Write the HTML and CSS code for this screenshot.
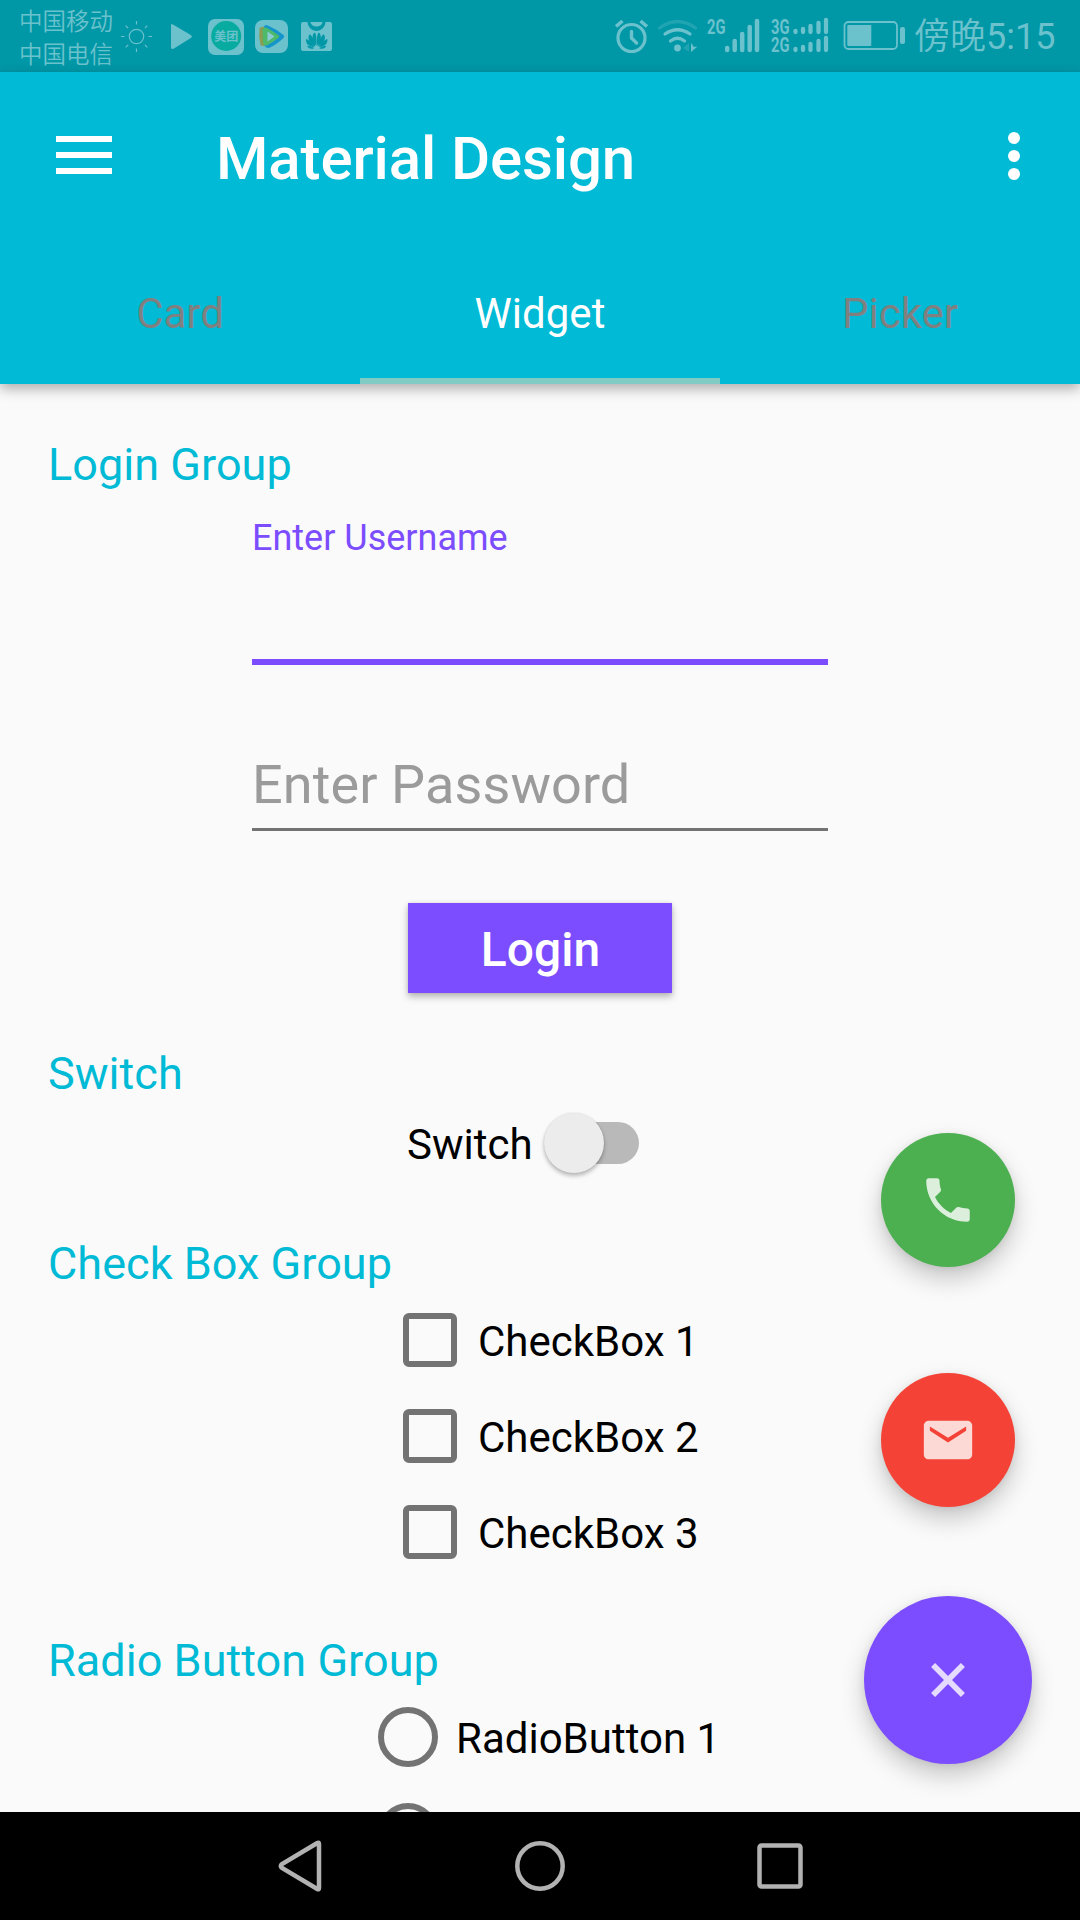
FILE: index.html
```html
<!DOCTYPE html>
<html lang="en">
<head>
<meta charset="utf-8">
<title>Material Design</title>
<link rel="stylesheet" href="styles.css">
</head>
<body>
<div class="screen">
  <div class="status-bar">
    <div class="carriers" lang="zh-CN"><span>中国移动</span><span>中国电信</span></div>
    <svg class="icon sun" width="32" height="72" viewBox="121 0 32 72" fill="none" stroke-width="1.2">
      <circle cx="136.5" cy="36.5" r="7.2"/>
      <path d="M136.500 21v3.500M136.500 48.500v3.500M121 36.500h3.500M148.500 36.500h3.500M125.700 25.700l2.400 2.400M144.900 44.900l2.400 2.400M147.300 25.700l-2.400 2.400M128.100 44.900l-2.400 2.400"/>
    </svg>
    <svg class="icon play" width="22" height="72" viewBox="171 0 22 72"><path d="M172.500 24.200L191.200 35.200Q192.600 36.500 191.200 37.800L173.500 48.800Q171 49.500 171 47.500V25.500Q171 23.500 172.500 24.200Z"/></svg>
    <svg class="icon meituan" width="36" height="72" viewBox="208 0 36 72">
      <rect x="208" y="19" width="36" height="36" rx="7"/>
      <circle class="meituan-disc" cx="226.200" cy="36" r="15"/>
      <text class="meituan-text" x="226.200" y="41" text-anchor="middle">美团</text>
    </svg>
    <svg class="icon video" width="33" height="72" viewBox="255 0 33 72">
      <rect x="255" y="20" width="33" height="33" rx="8"/>
      <path fill="#8c9c50" d="M259.500 28Q264 25.500 266 28V45Q263 47 260.500 45Q258.500 37 259.500 28Z"/>
      <path fill="#1595cb" d="M264 27Q264.500 24 268 25.500Q277 29.500 283.500 35Q285 36.500 283.500 38Q276 45 269 48Q265 48 264.500 45Z"/>
      <path fill="#4db96b" d="M262.500 30Q263 26.500 266.500 27.700Q273 31 278.500 35.200Q280 36.500 278.500 37.800Q272 43 267 45.500Q263.500 46 263 43Z"/>
      <path fill="#8bcbd5" d="M267.500 31.500L274.500 36.500L267.500 41.500Z"/>
    </svg>
    <svg class="icon huawei" width="32" height="72" viewBox="301 0 32 72">
      <path d="M303 22H307.500A9 9 0 0 0 325.500 22H330Q332 22 332 24V49Q332 51 330 51H303Q301 51 301 49V24Q301 22 303 22Z"/>
      <path d="M310.500 22H322.500A6 4.500 0 0 1 310.500 22Z"/>
      <g class="petals">
        <path d="M316.300 46C312 41 311.500 35 314.500 32.500C316.700 34 316.700 41 316.300 46Z"/>
        <path d="M317.100 46C316.700 41 316.700 34 318.900 32.500C321.900 35 321.400 41 317.100 46Z"/>
        <path d="M315.300 46.500C309 43 307 38 309.500 34.200C312.800 36 314.800 42 315.300 46.500Z"/>
        <path d="M318.100 46.500C318.600 42 320.600 36 323.900 34.200C326.400 38 324.400 43 318.100 46.500Z"/>
        <path d="M314.500 47.200C308.500 46.500 305.500 43.500 306 39C309.500 40.200 312.700 44 314.500 47.200Z"/>
        <path d="M318.900 47.200C320.700 44 323.900 40.200 327.400 39C327.900 43.500 324.900 46.500 318.900 47.200Z"/>
        <path d="M314.200 48.200C311 49.600 308.300 48.700 307 45.800C310 46 312.500 47 314.200 48.200Z"/>
        <path d="M319.200 48.200C320.900 47 323.400 46 326.400 45.800C325.100 48.700 322.400 49.600 319.200 48.200Z"/>
      </g>
    </svg>
    <svg class="icon alarm" width="34" height="72" viewBox="615 0 34 72">
      <g fill="none" stroke-width="3.200" stroke-linecap="round" stroke-linejoin="round">
        <circle cx="631.500" cy="38" r="13.500"/>
        <path stroke-width="3.400" d="M631.500 31.500V38L636.500 43"/>
        <path stroke-width="3.600" stroke-linecap="butt" d="M616 26.500L622.500 21M647 26.500L640.500 21"/>
      </g>
    </svg>
    <svg class="icon wifi" width="40" height="72" viewBox="658 0 40 72">
      <g fill="none" stroke-width="3.200" stroke-linecap="round">
        <path opacity=".3" d="M659.500 28Q677.500 15 695.500 28"/>
        <path d="M665 34Q677.500 25.500 690 34"/>
        <path d="M670.500 41Q677.500 35.500 684.500 41"/>
      </g>
      <circle cx="677.500" cy="48" r="3.400"/>
      <path opacity=".3" d="M683 48L689 43V52Z"/>
      <path d="M691 43V52L697.500 46.500L694 47Z"/>
    </svg>
    <svg class="icon signal" width="53" height="72" viewBox="707 0 53 72">
      <text class="net" x="707" y="34" textLength="18.500" lengthAdjust="spacingAndGlyphs">2G</text>
      <g fill="none" stroke-width="4.500" stroke-linecap="round"><path d="M727.200 48v2M734.700 41v9M742.200 34v16M749.700 27v23M757 21v29"/></g>
    </svg>
    <svg class="icon dual" width="58" height="72" viewBox="771 0 58 72">
      <text class="net" x="771" y="34" textLength="18.500" lengthAdjust="spacingAndGlyphs">3G</text>
      <text class="net" x="771" y="52" textLength="18.500" lengthAdjust="spacingAndGlyphs">2G</text>
      <g fill="none" stroke-width="4.300" stroke-linecap="round"><path d="M795.500 31v1M803 29v3M810.500 26v6M818.500 23v9M826 20v12M795.500 49v1M803 47v3M810.500 44v6M818.500 41v9M826 38v12"/></g>
    </svg>
    <svg class="icon battery" width="63" height="72" viewBox="843 0 63 72">
      <rect x="844.500" y="22" width="52.500" height="27" rx="4" fill="none" stroke-width="1.800"/>
      <rect x="847.300" y="25" width="24" height="21" rx="1"/>
      <rect x="900" y="27" width="5" height="17" rx="2"/>
    </svg>
    <span class="clock" lang="zh-CN"><span class="daypart">傍晚</span>5:15</span>
  </div>

  <header class="app-bar">
    <div class="toolbar">
      <svg class="menu" width="56" height="38" viewBox="0 0 56 38" fill="#fff"><path d="M0 0h56v6H0zM0 16h56v6H0zM0 32h56v6H0z"/></svg>
      <h1 class="title">Material Design</h1>
      <svg class="more" width="12" height="48" viewBox="0 0 12 48" fill="#fff"><circle cx="6" cy="6" r="6"/><circle cx="6" cy="24" r="6"/><circle cx="6" cy="42" r="6"/></svg>
    </div>
    <nav class="tabs">
      <span class="tab">Card</span>
      <span class="tab tab-active">Widget</span>
      <span class="tab">Picker</span>
    </nav>
  </header>

  <main class="content">
    <h2 class="heading">Login Group</h2>
    <div class="field field-focused">
      <span class="float-label">Enter Username</span>
    </div>
    <div class="field field-idle">
      <span class="placeholder">Enter Password</span>
    </div>
    <button class="login">Login</button>

    <h2 class="heading heading-switch">Switch</h2>
    <div class="switch-row">
      <span class="label">Switch</span>
      <span class="track"><span class="thumb"></span></span>
    </div>

    <h2 class="heading heading-check">Check Box Group</h2>
    <div class="checks">
      <div class="option"><span class="box"></span><span class="label">CheckBox 1</span></div>
      <div class="option"><span class="box"></span><span class="label">CheckBox 2</span></div>
      <div class="option"><span class="box"></span><span class="label">CheckBox 3</span></div>
    </div>

    <h2 class="heading heading-radio">Radio Button Group</h2>
    <div class="radios">
      <div class="option"><span class="ring"></span><span class="label">RadioButton 1</span></div>
      <div class="option"><span class="ring"></span></div>
    </div>

    <div class="fabs">
      <div class="fab fab-call"><svg width="58" height="58" viewBox="0 0 24 24" fill="#fff" fill-opacity=".8"><path d="M6.620 10.790c1.440 2.830 3.760 5.140 6.590 6.590l2.200-2.200c.27-.27.67-.36 1.020-.24 1.120.37 2.330.57 3.570.57.550 0 1 .45 1 1V20c0 .55-.45 1-1 1-9.390 0-17-7.610-17-17 0-.55.450-1 1-1h3.500c.55 0 1 .45 1 1 0 1.250.2 2.450.57 3.570.11.350.030.740-.25 1.020l-2.200 2.200z"/></svg></div>
      <div class="fab fab-mail"><svg width="58" height="58" viewBox="0 0 24 24" fill="#fff" fill-opacity=".8"><path d="M20 4H4c-1.100 0-1.990.9-1.990 2L2 18c0 1.100.9 2 2 2h16c1.100 0 2-.9 2-2V6c0-1.100-.9-2-2-2zm-.5 4.200l-7.500 4.800-7.500-4.800V6.400l7.500 4.700 7.500-4.700v1.800z"/></svg></div>
      <div class="fab fab-close"><svg width="58" height="58" viewBox="0 0 24 24" fill="#fff" fill-opacity=".8"><path d="M19 6.660L17.340 5 12 10.340 6.660 5 5 6.660 10.340 12 5 17.340 6.660 19 12 13.660 17.340 19 19 17.340 13.660 12z"/></svg></div>
    </div>
  </main>

  <footer class="nav-bar">
    <svg width="48" height="54" viewBox="0 0 48 54"><path d="M43 5V49Q43 51 41.300 50L6 29Q3.500 27 6 25L41.300 4Q43 3 43 5Z"/></svg>
    <svg width="54" height="54" viewBox="0 0 54 54"><circle cx="27" cy="27" r="22.700"/></svg>
    <svg width="54" height="54" viewBox="0 0 54 54"><rect x="6.500" y="6.500" width="41" height="41" rx="2"/></svg>
  </footer>
</div>
</body>
</html>
```
FILE: styles.css
```css
* { box-sizing: border-box; }

body {
  margin: 0;
  background: #fafafa;
  color: #000;
  font-family: Roboto, "Noto Sans CJK SC", sans-serif;
}

h1, h2 { margin: 0; }
svg { display: block; flex: none; }

.screen {
  width: 1080px;
  height: 1920px;
  display: flex;
  flex-direction: column;
  overflow: hidden;
}

/* Status bar */
.status-bar {
  flex: none;
  height: 72px;
  padding-left: 19px;
  display: flex;
  align-items: center;
  background: #0097a7;
  color: #6bc2cd;
}

.carriers {
  width: 94px;
  padding-top: 1px;
  display: flex;
  flex-direction: column;
  font-family: "Noto Sans CJK SC", sans-serif;
  font-size: 23.5px;
  font-weight: 350;
  line-height: 33px;
  white-space: nowrap;
}

.icon { fill: #6bc2cd; stroke: none; }
.icon [stroke-width] { stroke: #6bc2cd; }
.sun { fill: none; stroke: #6bc2cd; margin-left: 8px; }
.play { margin-left: 18px; }
.meituan { margin-left: 15px; }
.video { margin-left: 11px; }
.huawei { margin-left: 13px; }
.alarm { margin-left: 282px; }
.wifi { margin-left: 9px; }
.signal { margin-left: 9px; }
.dual { margin-left: 11px; }
.battery { margin-left: 14px; }

.meituan-disc { fill: #08ab9f; }
.meituan-text {
  font: 700 12px "Noto Sans CJK SC", sans-serif;
}
.petals { fill: #0097a7; }
.net { font: 700 20px Roboto, sans-serif; }

.clock {
  margin-left: 8px;
  padding-top: 2px;
  font-size: 36px;
  line-height: 48px;
  white-space: nowrap;
}

.daypart { font-weight: 350; }

/* App bar */
.app-bar {
  flex: none;
  height: 312px;
  position: relative;
  z-index: 1;
  display: flex;
  flex-direction: column;
  background: #00bad6;
  color: #fff;
  box-shadow: 0 5px 12px rgba(0, 0, 0, .3);
}

.toolbar {
  height: 168px;
  padding: 0 60px 0 56px;
  display: flex;
  align-items: center;
}

.menu { margin-bottom: 2px; }

.title {
  flex: 1;
  margin-left: 104px;
  padding-top: 6px;
  font-size: 60px;
  font-weight: 500;
  line-height: 70px;
  letter-spacing: -.12px;
}

.tabs {
  height: 144px;
  display: grid;
  grid-template-columns: repeat(3, 1fr);
}

.tab {
  padding-top: 50px;
  color: #808080;
  font-size: 42px;
  line-height: 48px;
  text-align: center;
}

.tab-active {
  color: #fff;
  border-bottom: 6px solid #80cbc4;
}

/* Content */
.content {
  flex: none;
  position: relative;
  height: 1428px;
  padding-top: 54px;
  overflow: hidden;
}

.heading {
  margin-left: 48px;
  color: #00bad6;
  font-size: 45px;
  font-weight: 400;
  line-height: 54px;
  letter-spacing: .04px;
}

.field { width: 576px; margin: 0 auto; }

.field-focused {
  height: 148px;
  margin-top: 25px;
  border-bottom: 6px solid #7c4dff;
}

.float-label {
  display: block;
  color: #7c4dff;
  font-size: 36px;
  line-height: 42px;
}

.field-idle {
  height: 78px;
  margin-top: 88px;
  border-bottom: 3px solid #737373;
}

.placeholder {
  display: block;
  color: #9b9b9b;
  font-size: 54px;
  line-height: 64px;
  letter-spacing: .1px;
}

.login {
  display: block;
  width: 264px;
  height: 90px;
  margin: 72px auto 0;
  padding: 4px 0 0 1px;
  border: 0;
  background: #7c4dff;
  color: #fff;
  font: 500 48px/56px Roboto, sans-serif;
  box-shadow: 0 4px 7px rgba(0, 0, 0, .26), 0 0 4px rgba(0, 0, 0, .1);
}

.heading-switch { margin-top: 54px; }

.switch-row {
  height: 61px;
  margin: 11px 0 0 407px;
  display: flex;
  align-items: center;
}

.label {
  padding-top: 3px;
  font-size: 42px;
  line-height: 48px;
  white-space: nowrap;
}

.switch-row .label { padding-top: 5px; }

.track {
  width: 88px;
  height: 42px;
  margin-left: 18px;
  display: flex;
  align-items: center;
  border-radius: 21px;
  background: #b9b9b9;
}

.thumb {
  width: 60px;
  height: 60px;
  flex: none;
  margin-left: -7px;
  border-radius: 50%;
  background: #ececec;
  box-shadow: 0 3px 4px rgba(0, 0, 0, .26), 0 0 2px rgba(0, 0, 0, .12);
}

.heading-check { margin-top: 64px; }

.option { display: flex; align-items: center; }

.checks {
  margin: 22px 0 0 403px;
  display: flex;
  flex-direction: column;
  gap: 42px;
}

.checks .option { height: 54px; gap: 21px; }

.box {
  width: 54px;
  height: 54px;
  border: 6px solid #737373;
  border-radius: 6px;
}

.heading-radio { margin-top: 75px; }

.radios {
  margin: 19px 0 0 378px;
  display: flex;
  flex-direction: column;
  gap: 36px;
}

.radios .option { height: 60px; gap: 18px; }

.ring {
  width: 60px;
  height: 60px;
  border: 6px solid #737373;
  border-radius: 50%;
}

/* Floating actions over the form */
.fabs {
  position: absolute;
  right: 48px;
  bottom: 48px;
  display: flex;
  flex-direction: column;
  align-items: center;
}

.fab {
  width: 134px;
  height: 134px;
  display: flex;
  align-items: center;
  justify-content: center;
  border-radius: 50%;
  box-shadow: 0 12px 24px rgba(0, 0, 0, .2), 0 2px 8px rgba(0, 0, 0, .08);
}

.fab-call { background: #4caf50; }
.fab-mail { margin-top: 106px; background: #f44336; }
.fab-close {
  width: 168px;
  height: 168px;
  margin-top: 89px;
  background: #7c4dff;
}

/* System navigation */
.nav-bar {
  flex: none;
  height: 108px;
  padding-left: 276px;
  display: flex;
  align-items: center;
  background: #000;
}

.nav-bar svg { fill: none; stroke: #b2b2b2; stroke-width: 4.5; }
.nav-bar svg:nth-child(2) { margin-left: 189px; }
.nav-bar svg:nth-child(3) { margin-left: 186px; }
```
